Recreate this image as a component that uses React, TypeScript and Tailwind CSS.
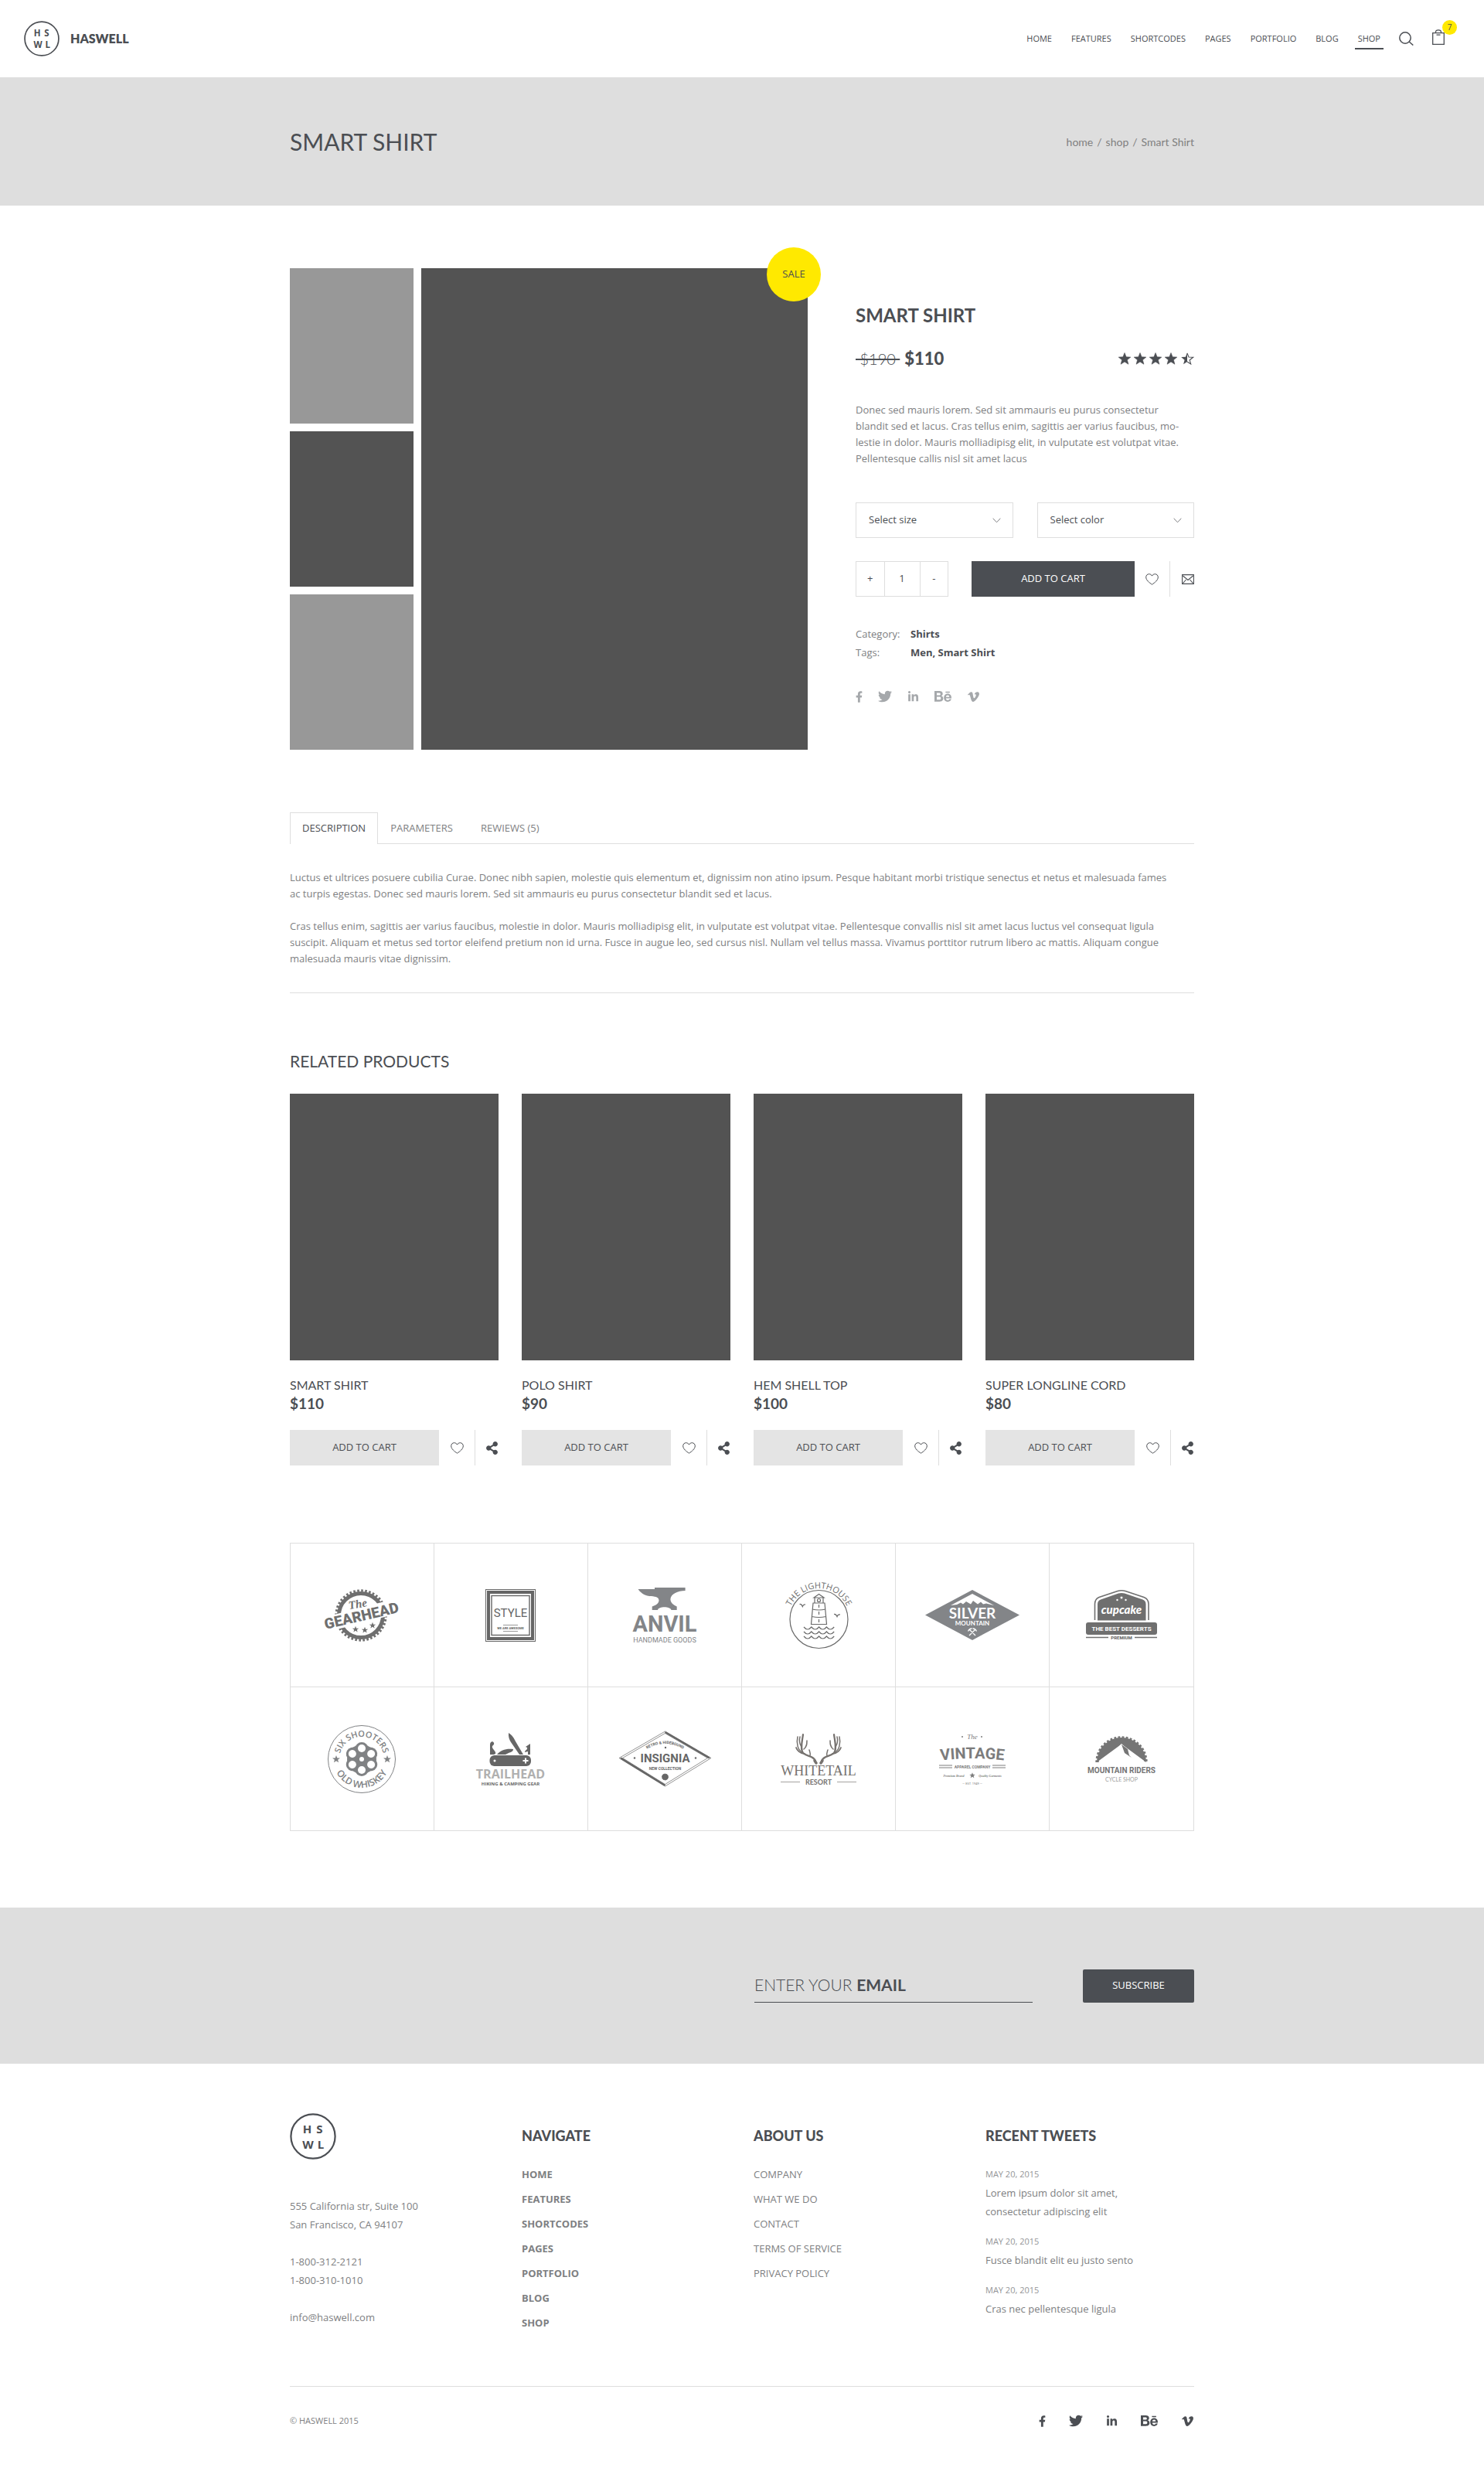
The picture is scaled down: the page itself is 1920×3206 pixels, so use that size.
import { useState, type ReactNode } from "react";
import { FaBehance, FaFacebookF, FaLinkedinIn, FaShareAlt, FaTwitter, FaVimeoV } from "react-icons/fa";

const navItems = ["HOME", "FEATURES", "SHORTCODES", "PAGES", "PORTFOLIO", "BLOG", "SHOP"];
const aboutItems = ["COMPANY", "WHAT WE DO", "CONTACT", "TERMS OF SERVICE", "PRIVACY POLICY"];
const products = [
  { name: "SMART SHIRT", price: "$110" },
  { name: "POLO SHIRT", price: "$90" },
  { name: "HEM SHELL TOP", price: "$100" },
  { name: "SUPER LONGLINE CORD", price: "$80" },
];
const tweets = ["Lorem ipsum dolor sit amet, consectetur adipiscing elit", "Fusce blandit elit eu justo sento", "Cras nec pellentesque ligula"];
const socials = [
  { name: "Facebook", Icon: FaFacebookF, size: "h-[17px] w-[9px]" },
  { name: "Twitter", Icon: FaTwitter, size: "size-[18px]" },
  { name: "LinkedIn", Icon: FaLinkedinIn, size: "size-[15px]" },
  { name: "Behance", Icon: FaBehance, size: "size-[22px]" },
  { name: "Vimeo", Icon: FaVimeoV, size: "size-[17px]" },
];

const GROTESK = "Roboto, sans-serif";
const OPEN = "'Open Sans', sans-serif";
const LATO = "Lato, sans-serif";
const SERIF = "'Liberation Serif', serif";
const STAR = "M0 -5 L1.3 -1.6 L5 -1.5 L2.1 0.7 L3.1 4.2 L0 2.2 L-3.1 4.2 L-2.1 0.7 L-5 -1.5 L-1.3 -1.6 Z";

function Monogram({ size }: { size: number }) {
  return (
    <svg width={size} height={size} viewBox="0 0 60 60" aria-label="HSWL" role="img">
      <circle cx="30" cy="30" r="28.6" fill="none" stroke="#4b4e53" strokeWidth="2.2" />
      <g fill="#4b4e53" fontFamily={OPEN} fontWeight="700" fontSize="15" textAnchor="middle">
        <text x="22.5" y="26">H</text>
        <text x="38.5" y="26">S</text>
        <text x="23.5" y="45.5">W</text>
        <text x="40" y="45.5">L</text>
      </g>
    </svg>
  );
}

function Heart() {
  return (
    <svg width="17" height="15" viewBox="0 0 17 15" fill="none" stroke="#4b4e53" strokeWidth="1">
      <path d="M8.5 14.2C5 11.8 0.7 8.6 0.7 4.8C0.7 2.4 2.4 0.7 4.6 0.7C6.3 0.7 7.7 1.6 8.5 3.1C9.3 1.6 10.7 0.7 12.4 0.7C14.6 0.7 16.3 2.4 16.3 4.8C16.3 8.6 12 11.8 8.5 14.2Z" />
    </svg>
  );
}

function Rating() {
  const star = "M8 0.5L10.1 5.8L15.8 6.1L11.4 9.7L12.9 15.2L8 12.1L3.1 15.2L4.6 9.7L0.2 6.1L5.9 5.8Z";
  return (
    <svg width="98" height="16" viewBox="0 0 98 16" role="img" aria-label="Rated 4.5 out of 5">
      {[0, 20, 40, 60].map((x) => (
        <path key={x} d={star} transform={`translate(${x} 0)`} fill="#4b4e53" stroke="#4b4e53" strokeWidth=".6" />
      ))}
      <g transform="translate(81 0)">
        <path d="M8 0.5V12.1L3.1 15.2L4.6 9.7L0.2 6.1L5.9 5.8Z" fill="#4b4e53" />
        <path d="M8 0.9L10 6L15.6 6.300L11.200 9.800L12.700 15L8 12" fill="none" stroke="#4b4e53" strokeWidth="1.100" />
      </g>
    </svg>
  );
}

function Dropdown({ label, options }: { label: string; options: string[] }) {
  return (
    <div className="relative flex-1">
      <select aria-label={label} className="h-[46px] w-full appearance-none rounded-none border border-[#dedede] bg-white px-4 text-[13px] text-[#4b4e53]">
        <option>{label}</option>
        {options.map((o) => (
          <option key={o}>{o}</option>
        ))}
      </select>
      <svg className="pointer-events-none absolute top-5 right-4" width="11" height="7" viewBox="0 0 11 7" fill="none" stroke="#808284">
        <path d="M0.7 0.7L5.5 5.8L10.3 0.7" />
      </svg>
    </div>
  );
}

function Pic({ w, h, label, children }: { w: number; h: number; label: string; children: ReactNode }) {
  return (
    <svg width={w} height={h} viewBox={`0 0 ${w} ${h}`} role="img" aria-label={label} className="overflow-visible">
      {children}
    </svg>
  );
}

function Gearhead() {
  return (
    <Pic w={98} h={68} label="The Gearhead">
      <circle cx="48" cy="34" r="28.5" fill="none" stroke="#6f6f6f" strokeWidth="5" />
      <circle cx="48" cy="34" r="32" fill="none" stroke="#6f6f6f" strokeWidth="3.4" strokeDasharray="2.6 2.426" />
      <path d="M-2 37L98 11V31L-2 57Z" fill="#fff" />
      <circle cx="48" cy="34" r="25" fill="#fff" />
      <text x="45" y="24" transform="rotate(-10 46 26)" fontFamily={SERIF} fontStyle="italic" fontWeight="700" fontSize="15" textAnchor="middle" fill="#6f6f6f">The</text>
      <text x="49" y="41" transform="rotate(-13 49 36)" fontFamily={GROTESK} fontWeight="900" fontSize="19" textAnchor="middle" fill="#6f6f6f">GEARHEAD</text>
      <path d={STAR} transform="translate(41 52) scale(.85)" fill="#6f6f6f" />
      <path d={STAR} transform="translate(53 53) scale(.85)" fill="#6f6f6f" />
      <path d={STAR} transform="translate(63 47) scale(.85)" fill="#6f6f6f" />
    </Pic>
  );
}

function StyleLogo() {
  return (
    <Pic w={65} h={68} label="Style">
      <rect x=".5" y=".5" width="64" height="67" fill="none" stroke="#666" />
      <rect x="4" y="4" width="57" height="60" fill="none" stroke="#666" strokeWidth="4" />
      <rect x="8" y="8.5" width="49" height="51" fill="none" stroke="#666" strokeWidth="1.4" />
      <text x="32.5" y="36" fontFamily={GROTESK} fontSize="15" textAnchor="middle" fill="#666">STYLE</text>
      <path d="M23 46.500H42M23 54.500H42" stroke="#999" />
      <text x="32.500" y="52" fontFamily={GROTESK} fontWeight="700" fontSize="4" textAnchor="middle" fill="#666">WE ARE AWESOME</text>
    </Pic>
  );
}

function Anvil() {
  return (
    <Pic w={80} h={72} label="Anvil Handmade Goods">
      <path d="M5.600 2H27V0H66.600V4C57 4 48 8 47.400 15C47.400 20 52 22.500 55.700 24.500V29H48.500C47 24 32 24 31 29H23.700V24.500C29 23 32.500 20 32.500 16.500C32 11.500 27 11.500 20 11C13 10 7.500 5.500 5.600 2Z" fill="#838588" />
      <text x="40" y="57" fontFamily={GROTESK} fontWeight="700" fontSize="29" textAnchor="middle" fill="#838588">ANVIL</text>
      <text x="40" y="71" fontFamily={GROTESK} fontSize="9" textAnchor="middle" fill="#838588">HANDMADE GOODS</text>
    </Pic>
  );
}

function Lighthouse() {
  const wave = "q4.900 6 9.800 0";
  return (
    <Pic w={87} h={86} label="The Lighthouse">
      <path id="arc-lighthouse" d="M3.500 48A40 40 0 0 1 83.500 48" fill="none" />
      <g fill="none" stroke="#6a6a6a" strokeWidth="1.200">
        <circle cx="43.500" cy="48" r="37.500" />
        <path d="M36 27H51L53.500 54.500H33.500ZM38 27V20H49V27M37 20L43.500 15.500L50 20ZM35 35Q43.500 37 52 35M34.500 44.500Q43.500 46.500 52.500 44.500M43.500 29V33M43.500 38V42M43.500 48V52" />
        <circle cx="43.500" cy="23.500" r="2" />
        <path d={`M24 58${wave}${wave}${wave}${wave}M24 64${wave}${wave}${wave}${wave}M24 70${wave}${wave}${wave}${wave}`} />
        <path d="M18.500 28.500Q21 28 22.300 31.500Q23.500 28.500 26 29M63 41.500Q65.500 41 67 44.500Q68 41.500 71 42" />
      </g>
      <text fontFamily={OPEN} fontSize="11" fill="#6a6a6a" textAnchor="middle">
        <textPath href="#arc-lighthouse" startOffset="50%">THE LIGHTHOUSE</textPath>
      </text>
    </Pic>
  );
}

function SilverMountain() {
  return (
    <Pic w={122} h={65} label="Silver Mountain">
      <path d="M61 0L122 32.500L61 65L0 32.500Z" fill="#838588" />
      <path d="M33 20L61 5L89 20L79 17.500L75 18.500L72 15.500L68 18.500L62 14L59 18.500L53 15L49 18.500L46 16.500L41 19Z" fill="#fff" />
      <text x="61" y="37" fontFamily={LATO} fontWeight="700" fontSize="19" textAnchor="middle" fill="#fff">SILVER</text>
      <text x="61" y="46" fontFamily={LATO} fontWeight="700" fontSize="8" textAnchor="middle" fill="#fff">MOUNTAIN</text>
      <path d="M57 59L65 51M65 59L57 51M55.500 53.500Q57 50 60.500 50M61.500 50Q65 50 66.500 53.500" fill="none" stroke="#fff" strokeWidth="1.300" />
    </Pic>
  );
}

function Cupcake() {
  return (
    <Pic w={92} h={65} label="Cupcake, the best desserts">
      <path d="M11.500 39V18Q11.500 12 17 9.500L41 1.500Q46 0 51 1.500L75 9.500Q81 12 81 18V39" fill="none" stroke="#6f6f6f" strokeWidth="1.600" />
      <path d="M15 39.500V18.500Q15 14 19 12.500L42 4.500Q46 3.300 50 4.500L73.500 12.500Q77.500 14 77.500 18.500V39.500Z" fill="#6f6f6f" />
      <path d={STAR} transform="translate(46 10) scale(.45)" fill="#fff" />
      <circle cx="40.500" cy="13" r="1.200" fill="#fff" />
      <circle cx="51.500" cy="13" r="1.200" fill="#fff" />
      <text x="46" y="31" fontFamily={LATO} fontStyle="italic" fontWeight="900" fontSize="15" textAnchor="middle" fill="#fff">cupcake</text>
      <rect y="42" width="92" height="16" rx="3" fill="#6f6f6f" />
      <text x="46" y="53" fontFamily={GROTESK} fontWeight="700" fontSize="8" textAnchor="middle" fill="#fff">THE BEST DESSERTS</text>
      <path d="M0 61.500H29M63 61.500H92" stroke="#6f6f6f" strokeWidth="1.400" />
      <text x="46" y="64" fontFamily={GROTESK} fontWeight="900" fontSize="6" textAnchor="middle" fill="#6f6f6f">PREMIUM</text>
    </Pic>
  );
}

function SixShooters() {
  const holes = [0, 60, 120, 180, 240, 300];
  return (
    <Pic w={88} h={88} label="Six Shooters Old Whiskey">
      <path id="arc-six-top" d="M15 44A29 29 0 0 1 73 44" fill="none" />
      <path id="arc-six-bottom" d="M7 44A37 37 0 0 0 81 44" fill="none" />
      <circle cx="44" cy="44" r="43.500" fill="none" stroke="#808284" />
      <circle cx="44" cy="44" r="19" fill="#808284" />
      {holes.map((a) => (
        <circle key={a} cx="44" cy="30.500" r="8.500" fill="#808284" transform={`rotate(${a} 44 44)`} />
      ))}
      {holes.map((a) => (
        <circle key={a} cx="44" cy="30" r="5" fill="#fff" transform={`rotate(${a} 44 44)`} />
      ))}
      <circle cx="44" cy="44" r="3" fill="#fff" />
      <path d={STAR} transform="translate(11 44)" fill="#808284" />
      <path d={STAR} transform="translate(77 44)" fill="#808284" />
      <g fontFamily={OPEN} fontWeight="600" fontSize="11" fill="#808284" textAnchor="middle">
        <text><textPath href="#arc-six-top" startOffset="50%">SIX SHOOTERS</textPath></text>
        <text fontSize="12"><textPath href="#arc-six-bottom" startOffset="50%">OLD WHISKEY</textPath></text>
      </g>
    </Pic>
  );
}

function Trailhead() {
  return (
    <Pic w={93} h={68} label="Trailhead Hiking and Camping Gear">
      <rect x="19.500" y="29" width="53.500" height="14" rx="6" fill="#666" />
      <circle cx="26" cy="36" r="1.500" fill="#fff" />
      <path d="M66 32.500V39.500M62.500 36H69.500" stroke="#fff" strokeWidth="2" />
      <path d="M44 0C49 3 51 7 53 11L63 28H58L47 12C45 9 43.500 5 44 0Z" fill="#666" />
      <path d="M29 28C34 22 41 20 50 21C50 24 47 25 44 26L40 28Z" fill="#666" />
      <path d="M20 28V15C20 11 24 10 25 13C26 16 22 16 23 19C24 22 28 24 27 27L25 28Z" fill="#666" />
      <path d="M72 28V14L66 18L68 19C69 22 65 22 65 25L69 24V28Z" fill="#666" />
      <text x="46.500" y="59" fontFamily={OPEN} fontWeight="700" fontSize="16" textAnchor="middle" fill="#b0b0b0">TRAILHEAD</text>
      <text x="46.500" y="68" fontFamily={OPEN} fontWeight="700" fontSize="6" textAnchor="middle" fill="#666">HIKING &amp; CAMPING GEAR</text>
    </Pic>
  );
}

function Insignia() {
  return (
    <Pic w={121} h={73} label="Insignia New Collection">
      <path id="arc-insignia" d="M32 27Q60.500 7 89 27" fill="none" />
      <path d="M60.500 1L120 35.500L60.500 72L1 35.500Z" fill="none" stroke="#666" strokeWidth=".7" />
      <path d="M60.500 3.500L115.500 35.500L60.500 69.500L5.500 35.500Z" fill="none" stroke="#666" strokeWidth=".7" />
      <path d="M60.500 2L118 35.500M60.500 71L3 35.500" stroke="#666" strokeWidth="2.600" />
      <text fontFamily={GROTESK} fontWeight="700" fontSize="5" fill="#666" textAnchor="middle">
        <textPath href="#arc-insignia" startOffset="50%">RETRO &amp; HIDEBOUND</textPath>
      </text>
      <circle cx="61" cy="22" r="1.200" fill="#666" />
      <circle cx="21" cy="35.500" r="1.200" fill="#666" />
      <circle cx="100" cy="35.500" r="1.200" fill="#666" />
      <text x="60.500" y="41" fontFamily={GROTESK} fontWeight="700" fontSize="15" textAnchor="middle" fill="#666">INSIGNIA</text>
      <text x="60.500" y="51" fontFamily={GROTESK} fontWeight="700" fontSize="5" textAnchor="middle" fill="#666">NEW COLLECTION</text>
      <circle cx="60.500" cy="60" r="4" fill="#666" stroke="#666" strokeDasharray="1.500 1" />
    </Pic>
  );
}

function Antler() {
  return (
    <g fill="none" stroke="#76726f" strokeLinecap="round">
      <path d="M47 35C44 28 36 30 31 25C27 20 30 9 31 1" strokeWidth="2.200" />
      <path d="M46 35L48 38" strokeWidth="3.500" />
      <path d="M31 25C24 22 22 12 24 4M29 17C26 13 26 8 27 4M32 20C36 17 36 13 36 9M40 28.500C41 26 40 24 39 21" strokeWidth="1.500" />
      <path d="M33 26C27 26 23 21 22 18" strokeWidth="1.800" />
    </g>
  );
}

function Whitetail() {
  return (
    <Pic w={102} h={66} label="Whitetail Resort">
      <Antler />
      <g transform="translate(102 0) scale(-1 1)"><Antler /></g>
      <text x="51" y="54" fontFamily={SERIF} fontSize="18" textAnchor="middle" fill="#76726f">WHITETAIL</text>
      <text x="51" y="65.500" fontFamily={LATO} fontWeight="700" fontSize="9" textAnchor="middle" fill="#76726f">RESORT</text>
      <path d="M2 62.500H27M75 62.500H100" stroke="#a5a3a1" strokeWidth="1.200" />
    </Pic>
  );
}

function Vintage() {
  return (
    <Pic w={86} h={66} label="The Vintage Apparel Company">
      <path id="arc-vintage" d="M-2 35Q43 29 88 35" fill="none" />
      <text x="43" y="7" fontFamily={SERIF} fontStyle="italic" fontSize="9" textAnchor="middle" fill="#7c7c7c">The</text>
      <circle cx="30" cy="4" r="1" fill="#7c7c7c" />
      <circle cx="55" cy="4" r="1" fill="#7c7c7c" />
      <text fontFamily={GROTESK} fontWeight="700" fontSize="20" fill="#7c7c7c" textAnchor="middle">
        <textPath href="#arc-vintage" startOffset="50%">VINTAGE</textPath>
      </text>
      <path d="M0 41H17M0 44H17M69 41H86M69 44H86" stroke="#7c7c7c" />
      <text x="43" y="44.500" fontFamily={GROTESK} fontWeight="700" fontSize="5" textAnchor="middle" fill="#7c7c7c">APPAREL COMPANY</text>
      <g fontFamily={SERIF} fontStyle="italic" fontWeight="700" fontSize="4" textAnchor="middle" fill="#7c7c7c">
        <text x="19" y="56">Premium Brand</text>
        <text x="66" y="56">Quality Garments</text>
      </g>
      <path d={STAR} transform="translate(43 54) scale(.75)" fill="#7c7c7c" />
      <text x="43" y="66" fontFamily={GROTESK} fontSize="4" textAnchor="middle" fill="#7c7c7c">— EST. 1949 —</text>
    </Pic>
  );
}

function MountainRiders() {
  return (
    <Pic w={88} h={59} label="Mountain Riders Cycle Shop">
      <path d="M12 34A32 32 0 0 1 76 34L44 10.500Z" fill="#757575" />
      <path d="M12.500 34A31.500 31.500 0 0 1 75.500 34" fill="none" stroke="#757575" strokeWidth="4.400" strokeDasharray="2.700 2.300" />
      <path d="M44 10L79 44H9L30 22L32 22.500Z" fill="#fff" />
      <path d="M44 11L52 17L54 25L57 28L48 22Z" fill="#757575" />
      <text x="44" y="48" fontFamily={GROTESK} fontWeight="700" fontSize="10" textAnchor="middle" fill="#757575">MOUNTAIN RIDERS</text>
      <text x="44" y="58.500" fontFamily={LATO} fontSize="7" textAnchor="middle" fill="#a0a0a0">CYCLE SHOP</text>
    </Pic>
  );
}

const brands = [Gearhead, StyleLogo, Anvil, Lighthouse, SilverMountain, Cupcake, SixShooters, Trailhead, Insignia, Whitetail, Vintage, MountainRiders];

function SocialLinks({ className }: { className: string }) {
  return (
    <div className={`flex h-[18px] items-center ${className}`}>
      {socials.map(({ name, Icon, size }) => (
        <a key={name} href="#" aria-label={name}>
          <Icon className={size} />
        </a>
      ))}
    </div>
  );
}

export default function App() {
  const [qty, setQty] = useState(1);
  return (
    <div className="min-h-screen bg-white font-['Open_Sans',sans-serif] text-[13px] text-[#7e8082]">
      <header className="flex min-h-[100px] flex-wrap items-center justify-between gap-4 pr-[35px] pl-[31px] text-[#4b4e53]">
        <a href="#" className="flex items-center gap-[14px] font-[Lato,sans-serif] text-[16px] font-extrabold">
          <Monogram size={46} />
          HASWELL
        </a>
        <div className="flex items-center">
          <nav className="flex flex-wrap items-center gap-[25px] text-[11px]">
            {navItems.map((n) => (
              <a key={n} href="#" className={n === "SHOP" ? "-mx-1 border-b-2 border-[#4b4e53] px-1 pt-[6px] pb-1" : ""}>{n}</a>
            ))}
          </nav>
          <button aria-label="Search" className="ml-6">
            <svg width="19" height="18" viewBox="0 0 19 18" fill="none" stroke="#4b4e53" strokeWidth="1.500">
              <circle cx="8" cy="8" r="7.200" />
              <path d="M13.200 13L18.300 17.500" />
            </svg>
          </button>
          <button aria-label="Cart, 7 items" className="relative ml-6 pr-[16px] pb-1">
            <svg width="16" height="20" viewBox="0 0 16 20" fill="none" stroke="#4b4e53" strokeWidth="1.300">
              <path d="M.7 4.700H15.300V19.300H.7ZM4.500 4.500V3.500Q4.500.8 8 .8Q11.500.8 11.500 3.500V4.500M5.500 7.200H10.500" />
            </svg>
            <span className="absolute -top-3 right-0 flex size-[19px] items-center justify-center rounded-full bg-[#ffe900] text-[10px]">7</span>
          </button>
        </div>
      </header>

      <section className="bg-[#dedede]">
        <div className="mx-auto flex min-h-[166px] max-w-[1170px] items-center justify-between">
          <h1 className="font-[Lato,sans-serif] text-[30px] leading-8 text-[#4b4e53]">SMART SHIRT</h1>
          <nav aria-label="Breadcrumb" className="flex gap-[5px] font-[Lato,sans-serif] text-[14px] text-[#808080]">
            <a href="#">home</a><span>/</span><a href="#">shop</a><span>/</span><span>Smart Shirt</span>
          </nav>
        </div>
      </section>

      <main className="mx-auto max-w-[1170px] pt-[81px]">
        <div className="flex gap-[62px]">
          <div className="relative flex h-[623px] flex-[670] gap-[10px]">
            <div className="flex flex-[160] flex-col gap-[10px]">
              <button aria-label="Photo 1" className="flex-1 bg-[#989898]" />
              <button aria-label="Photo 2" className="flex-1 bg-[#535353]" />
              <button aria-label="Photo 3" className="flex-1 bg-[#989898]" />
            </div>
            <div className="flex-[500] bg-[#535353]" />
            <span className="absolute -top-[27px] -right-[17px] flex size-[70px] items-center justify-center rounded-full bg-[#ffe900] text-[13px] text-[#4b4e53]">SALE</span>
          </div>

          <div className="flex-[438] pt-[47px]">
            <h2 className="font-[Lato,sans-serif] text-[24px] leading-7 font-bold text-[#4b4e53]">SMART SHIRT</h2>
            <div className="mt-7 flex items-center justify-between text-[#4b4e53]">
              <p className="flex items-center gap-[6px] font-[Lato,sans-serif] leading-7">
                <s className="text-[20px] font-light">&nbsp;$190&nbsp;</s>
                <strong className="text-[22px] font-black">$110</strong>
              </p>
              <Rating />
            </div>
            <p className="mt-[42px] leading-[21px]">
              Donec sed mauris lorem. Sed sit ammauris eu purus consectetur<br />
              blandit sed et lacus. Cras tellus enim, sagittis aer varius faucibus, mo-<br />
              lestie in dolor. Mauris molliadipisg elit, in vulputate est volutpat vitae.<br />
              Pellentesque callis nisl sit amet lacus
            </p>
            <div className="mt-[46px] flex gap-[31px]">
              <Dropdown label="Select size" options={["S", "M", "L"]} />
              <Dropdown label="Select color" options={["Black", "Grey"]} />
            </div>
            <div className="mt-[30px] flex h-[46px] items-stretch text-[#4b4e53]">
              <div className="flex w-[120px] divide-x divide-[#dedede] border border-[#dedede]">
                <button aria-label="Increase quantity" className="flex-[37]" onClick={() => setQty(qty + 1)}>+</button>
                <input aria-label="Quantity" className="w-[46px] text-center" value={qty} onChange={(e) => setQty(Number(e.target.value) || 0)} />
                <button aria-label="Decrease quantity" className="flex-[37]" onClick={() => setQty(Math.max(0, qty - 1))}>-</button>
              </div>
              <button className="ml-[30px] flex-1 bg-[#4b4e53] text-white">ADD TO CART</button>
              <button aria-label="Add to wishlist" className="flex w-[46px] items-center justify-center border-r border-[#dedede]"><Heart /></button>
              <button aria-label="Send by email" className="flex w-[31px] items-center justify-end">
                <svg width="16" height="13" viewBox="0 0 16 13" fill="none" stroke="#4b4e53" strokeWidth="1.100">
                  <path d="M.6.6H15.400V12.400H.6ZM1.500 2L8 7.500L14.500 2M1.500 11.500L5.500 7M14.500 11.500L10.500 7" />
                </svg>
              </button>
            </div>
            <dl className="mt-9 grid grid-cols-[71px_1fr] leading-6">
              <dt>Category:</dt><dd className="font-bold text-[#4b4e53]">Shirts</dd>
              <dt>Tags:</dt><dd className="font-bold text-[#4b4e53]">Men, Smart Shirt</dd>
            </dl>
            <SocialLinks className="mt-9 gap-5 text-[#a5a8ab]" />
          </div>
        </div>

        <div role="tablist" className="mt-[81px] flex h-[41px] border-b border-[#dedede]">
          <button role="tab" aria-selected="true" className="-mb-px border border-b-0 border-[#dedede] bg-white px-[15px] text-[#4b4e53]">DESCRIPTION</button>
          <button role="tab" aria-selected="false" className="pt-px pl-4">PARAMETERS</button>
          <button role="tab" aria-selected="false" className="pt-px pl-9">REWIEWS (5)</button>
        </div>
        <div className="space-y-[21px] border-b border-[#dedede] pt-[33px] pb-[33px] leading-[21px]">
          <p>
            Luctus et ultrices posuere cubilia Curae. Donec nibh sapien, molestie quis elementum et, dignissim non atino ipsum. Pesque habitant morbi tristique senectus et netus et malesuada fames<br />
            ac turpis egestas. Donec sed mauris lorem. Sed sit ammauris eu purus consectetur blandit sed et lacus.
          </p>
          <p>
            Cras tellus enim, sagittis aer varius faucibus, molestie in dolor. Mauris molliadipisg elit, in vulputate est volutpat vitae. Pellentesque convallis nisl sit amet lacus luctus vel consequat ligula<br />
            suscipit. Aliquam et metus sed tortor eleifend pretium non id urna. Fusce in augue leo, sed cursus nisl. Nullam vel tellus massa. Vivamus porttitor rutrum libero ac mattis. Aliquam congue<br />
            malesuada mauris vitae dignissim.
          </p>
        </div>

        <h2 className="mt-[74px] font-[Lato,sans-serif] text-[21px] leading-7 text-[#4b4e53]">RELATED PRODUCTS</h2>
        <div className="mt-7 grid grid-cols-4 gap-[30px]">
          {products.map((p) => (
            <article key={p.name} className="text-[#4b4e53]">
              <div className="h-[345px] bg-[#535353]" />
              <h3 className="mt-5 font-[Lato,sans-serif] text-[16px] leading-6">{p.name}</h3>
              <p className="font-[Lato,sans-serif] text-[19px] leading-6 font-bold">{p.price}</p>
              <div className="mt-[22px] flex h-[46px]">
                <button className="flex-1 bg-[#e4e4e4]">ADD TO CART</button>
                <button aria-label={`Add ${p.name} to wishlist`} className="flex w-[47px] items-center justify-center border-r border-[#dedede]"><Heart /></button>
                <button aria-label={`Share ${p.name}`} className="flex w-[30px] items-center justify-end"><FaShareAlt className="size-[17px]" /></button>
              </div>
            </article>
          ))}
        </div>

        <div className="mt-[100px] grid auto-rows-[186px] grid-cols-[186fr_199fr_200fr_199fr_199fr_187fr] border-t border-l border-[#dedede]">
          {brands.map((Brand, i) => (
            <a key={i} href="#" className="flex items-center justify-center border-r border-b border-[#dedede]"><Brand /></a>
          ))}
        </div>
      </main>

      <section className="mt-[99px] bg-[#dedede]">
        <form className="mx-auto flex h-[202px] max-w-[1170px] items-center justify-end gap-[65px]" onSubmit={(e) => e.preventDefault()}>
          <div className="relative w-[360px]">
            <input id="email" type="email" placeholder=" " className="peer h-[44px] w-full border-b border-[#4b4e53] bg-transparent font-[Lato,sans-serif] text-[20px] text-[#4b4e53] outline-none" />
            <label htmlFor="email" className="invisible absolute top-[7px] left-0 font-[Lato,sans-serif] text-[21px] leading-7 font-light text-[#4b4e53] peer-placeholder-shown:visible">
              ENTER YOUR <b className="font-bold">EMAIL</b>
            </label>
          </div>
          <button className="h-[43px] w-[144px] rounded-[2px] bg-[#4b4e53] text-white">SUBSCRIBE</button>
        </form>
      </section>

      <footer className="mx-auto max-w-[1170px] pt-16">
        <div className="grid grid-cols-4 gap-[30px] border-b border-[#dedede] pb-[66px]">
          <div>
            <Monogram size={60} />
            <address className="mt-12 space-y-6 leading-6 not-italic">
              <p>555 California str, Suite 100<br />San Francisco, CA 94107</p>
              <p>1-800-312-2121<br />1-800-310-1010</p>
              <p><a href="mailto:info@haswell.com">info@haswell.com</a></p>
            </address>
          </div>
          <nav aria-label="Navigate" className="pt-[15px]">
            <h3 className="font-[Lato,sans-serif] text-[18px] leading-7 font-black text-[#4b4e53]">NAVIGATE</h3>
            <ul className="mt-5 leading-8 font-bold">
              {navItems.map((n) => <li key={n}><a href="#">{n}</a></li>)}
            </ul>
          </nav>
          <nav aria-label="About us" className="pt-[15px]">
            <h3 className="font-[Lato,sans-serif] text-[18px] leading-7 font-black text-[#4b4e53]">ABOUT US</h3>
            <ul className="mt-5 leading-8">
              {aboutItems.map((n) => <li key={n}><a href="#">{n}</a></li>)}
            </ul>
          </nav>
          <div className="pt-[15px]">
            <h3 className="font-[Lato,sans-serif] text-[18px] leading-7 font-black text-[#4b4e53]">RECENT TWEETS</h3>
            <ul className="mt-6 space-y-[15px] leading-6">
              {tweets.map((t) => (
                <li key={t} className="max-w-[230px]">
                  <time dateTime="2015-05-20" className="block text-[11px] leading-6 text-[#949698]">MAY 20, 2015</time>
                  {t}
                </li>
              ))}
            </ul>
          </div>
        </div>
        <div className="flex items-center justify-between pt-[35px] pb-[65px]">
          <p className="text-[11px]">© HASWELL 2015</p>
          <SocialLinks className="gap-[30px] text-[#4b4e53]" />
        </div>
      </footer>
    </div>
  );
}
